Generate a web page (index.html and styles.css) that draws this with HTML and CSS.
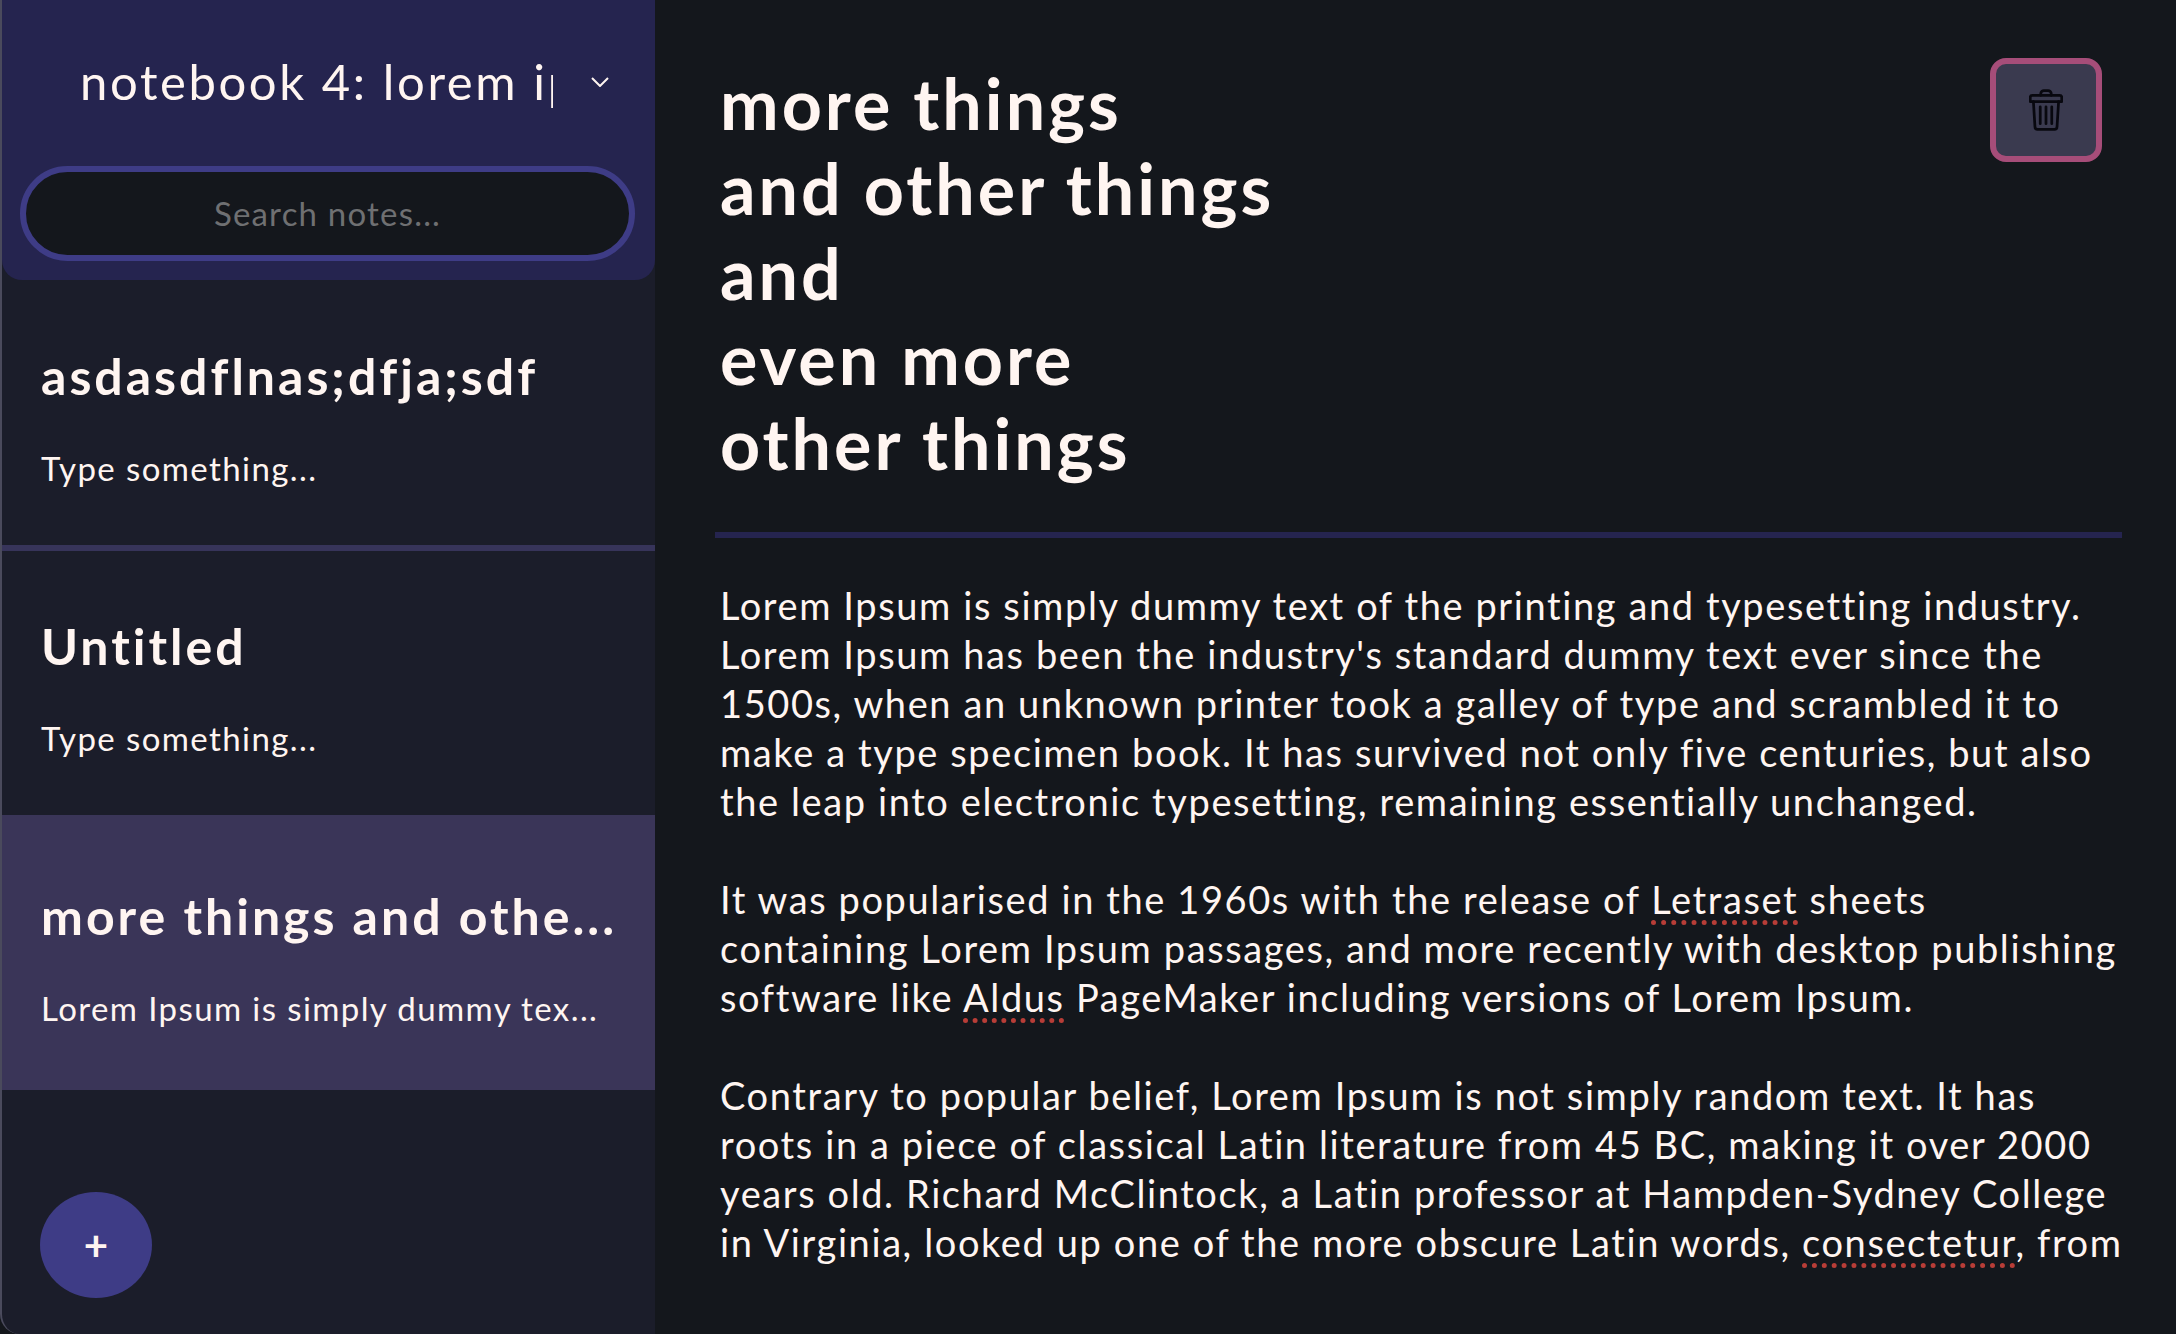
FILE: index.html
```html
<!DOCTYPE html>
<html lang="en">
<head>
    <meta charset="UTF-8">
    <meta name="viewport" content="width=device-width, initial-scale=1.0">
    <title>Notes</title>
    <link rel="stylesheet" href="styles.css">
</head>
<body>
    <div class="app">
        <aside class="sidebar">
            <header class="sidebar-head">
                <div class="notebook-select">
                    <span class="notebook-name">notebook 4: lorem ipsum</span>
                    <svg class="chevron" viewBox="0 0 18 10" aria-hidden="true"><path d="M1 1l8 8 8-8"/></svg>
                </div>
                <div class="search">Search notes...</div>
            </header>
            <ul class="note-list">
                <li class="note note-first">
                    <h3>asdasdflnas;dfja;sdf</h3>
                    <p>Type something...</p>
                </li>
                <li class="note">
                    <h3>Untitled</h3>
                    <p>Type something...</p>
                </li>
                <li class="note note-active">
                    <h3>more things and othe...</h3>
                    <p>Lorem Ipsum is simply dummy tex...</p>
                </li>
            </ul>
            <button class="add-note" aria-label="New note">+</button>
        </aside>
        <main class="editor">
            <button class="delete-note" aria-label="Delete note">
                <svg viewBox="0 0 32 40" aria-hidden="true">
                    <path d="M11 6V4.500a3 3 0 0 1 3-3h4a3 3 0 0 1 3 3V6"/>
                    <path d="M3 6h26a2 2 0 0 1 2 2v4H1V8a2 2 0 0 1 2-2z"/>
                    <path d="M4 12l1.500 24a2.500 2.500 0 0 0 2.500 2.500h16a2.500 2.500 0 0 0 2.500-2.500L28 12"/>
                    <path d="M10.500 17v16M16 17v16M21.500 17v16"/>
                </svg>
            </button>
            <h1 class="note-title">more things<br>and other things<br>and<br>even more<br>other things</h1>
            <div class="note-body">
                <p>Lorem Ipsum is simply dummy text of the printing and typesetting industry.<br>Lorem Ipsum has been the industry's standard dummy text ever since the<br>1500s, when an unknown printer took a galley of type and scrambled it to<br>make a type specimen book. It has survived not only five centuries, but also<br>the leap into electronic typesetting, remaining essentially unchanged.</p>
                <p>It was popularised in the 1960s with the release of <span class="typo">Letraset</span> sheets<br>containing Lorem Ipsum passages, and more recently with desktop publishing<br>software like <span class="typo">Aldus</span> PageMaker including versions of Lorem Ipsum.</p>
                <p>Contrary to popular belief, Lorem Ipsum is not simply random text. It has<br>roots in a piece of classical Latin literature from 45 BC, making it over 2000<br>years old. Richard McClintock, a Latin professor at Hampden-Sydney College<br>in Virginia, looked up one of the more obscure Latin words, <span class="typo">consectetur</span>, from<br>a Lorem Ipsum passage, and going through the cites of the word in classical</p>
            </div>
        </main>
    </div>
</body>
</html>
```

FILE: styles.css
```css
* {
    box-sizing: border-box;
}
body {
    margin: 0;
    background-color: #14171c;
    color: #fff5f1;
    font-family: 'Lato', 'Open Sans', sans-serif;
    overflow: hidden;
}
.app {
    display: flex;
    height: 1334px;
}

/* sidebar */
.sidebar {
    position: relative;
    display: flex;
    flex-direction: column;
    width: 655px;
    background-color: #1b1d2a;
    border-left: 2px solid #4a4a5c;
    border-bottom-left-radius: 20px;
}
.sidebar-head {
    height: 280px;
    padding-top: 48px;
    background-color: #25244f;
    border-radius: 0 0 20px 20px;
}
.notebook-select {
    display: flex;
    align-items: center;
    height: 66px;
    padding-left: 78px;
}
.notebook-name {
    width: 473px;
    overflow: hidden;
    white-space: nowrap;
    font-size: 49px;
    letter-spacing: 2.600px;
}
.chevron {
    width: 18px;
    height: 10px;
    margin: 2px 0 0 38px;
    fill: none;
    stroke: #fff5f1;
    stroke-width: 2;
}
.search {
    display: flex;
    align-items: center;
    justify-content: center;
    width: 615px;
    height: 95px;
    margin: 52px 0 0 18px;
    padding-bottom: 2px;
    background-color: #14171c;
    border: 6px solid #3e3c86;
    border-radius: 48px;
    color: #6f7072;
    font-size: 33px;
    letter-spacing: 1.200px;
}
.note-list {
    margin: 0;
    padding: 0;
    list-style: none;
}
.note {
    height: 264px;
    padding: 65px 39px 0;
}
.note-first {
    height: 271px;
    padding-top: 66px;
    border-bottom: 6px solid #37345a;
}
.note-active {
    height: 275px;
    padding-top: 71px;
    background-color: #3a3558;
}
.note h3 {
    margin: 0;
    font-size: 50px;
    line-height: 60px;
    font-weight: 700;
    letter-spacing: 3px;
    white-space: nowrap;
}
.note p {
    margin: 42px 0 0;
    font-size: 33px;
    line-height: 40px;
    letter-spacing: 1.400px;
    white-space: nowrap;
}
.add-note {
    position: absolute;
    left: 38px;
    top: 1192px;
    width: 112px;
    height: 106px;
    padding: 0;
    border: 0;
    border-radius: 50%;
    background-color: #3e3c86;
    color: #fff5f1;
    font-family: inherit;
    font-size: 42px;
    font-weight: 700;
}

/* editor */
.editor {
    position: relative;
    display: flex;
    flex-direction: column;
    flex: 1;
    min-width: 0;
    padding: 61px 54px 58px 60px;
}
.delete-note {
    position: absolute;
    top: 58px;
    left: 1335px;
    display: flex;
    align-items: center;
    justify-content: center;
    width: 112px;
    height: 104px;
    padding: 0;
    background-color: #3a3a4f;
    border: 6px solid #a64d79;
    border-radius: 16px;
}
.delete-note svg {
    width: 34px;
    height: 42px;
    fill: none;
    stroke: #08080f;
    stroke-width: 2.600;
    stroke-linejoin: round;
    stroke-linecap: round;
}
.note-title {
    margin: 0 0 0 5px;
    padding-bottom: 46px;
    font-size: 70px;
    line-height: 85px;
    font-weight: 700;
    letter-spacing: 3px;
}
.note-body {
    flex: 1;
    min-height: 0;
    overflow: hidden;
    padding: 43px 0 0 5px;
    border-top: 6px solid #25244f;
    font-size: 38px;
    line-height: 49px;
    letter-spacing: 1.600px;
    white-space: nowrap;
}
.note-body p {
    margin: 0 0 49px;
}
.typo {
    text-decoration: underline dotted #b83d37 5px;
    text-underline-offset: 6px;
}
```
